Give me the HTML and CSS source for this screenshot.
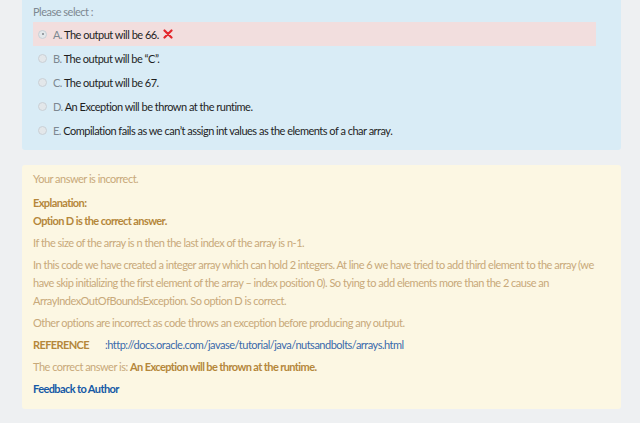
FILE: index.html
```html
<!DOCTYPE html>
<html lang="en">
<head>
  <meta charset="UTF-8">
  <title>Question review</title>
  <link rel="stylesheet" href="styles.css">
</head>
<body>

  <div class="page">
    <div class="question-box">
      <p class="prompt">Please select :</p>
      <ul class="options">
        <li class="option wrong">
          <span class="radio checked"></span>
          <span class="label"><span class="letter">A.</span> The output will be 66.</span>
          <svg class="cross" width="10" height="10" viewBox="0 0 10 10"><path d="M1.5 1.5 L8.5 8.5 M8.5 1.5 L1.5 8.5" stroke="#e3262b" stroke-width="2.2" stroke-linecap="round"/></svg>
        </li>
        <li class="option"><span class="radio"></span><span class="label"><span class="letter">B.</span> The output will be “C”.</span></li>
        <li class="option"><span class="radio"></span><span class="label"><span class="letter">C.</span> The output will be 67.</span></li>
        <li class="option"><span class="radio"></span><span class="label"><span class="letter">D.</span> An Exception will be thrown at the runtime.</span></li>
        <li class="option"><span class="radio"></span><span class="label"><span class="letter">E.</span> Compilation fails as we can’t assign int values as the elements of a char array.</span></li>
      </ul>
    </div>

    <div class="answer-box">
      <p class="first">Your answer is incorrect.</p>
      <p class="strong tight">Explanation:</p>
      <p class="strong">Option D is the correct answer.</p>
      <p>If the size of the array is n then the last index of the array is n-1.</p>
      <p>In this code we have created a integer array which can hold 2 integers. At line 6 we have tried to add third element to the array (we have skip initializing the first element of the array – index position 0). So tying to add elements more than the 2 cause an ArrayIndexOutOfBoundsException. So option D is correct.</p>
      <p>Other options are incorrect as code throws an exception before producing any output.</p>
      <p><span class="strong ref">REFERENCE</span><a href="#">:http://docs.oracle.com/javase/tutorial/java/nutsandbolts/arrays.html</a></p>
      <p>The correct answer is: <span class="strong">An Exception will be thrown at the runtime.</span></p>
      <p><a class="feedback" href="#">Feedback to Author</a></p>
    </div>
  </div>

</body>
</html>
```

FILE: styles.css
```css
body {
  margin: 0;
  background: #eef0f2;
  font-family: Lato, "Noto Sans", sans-serif;
  font-size: 11px;
  letter-spacing: -0.5px;
  color: #333;
}

.page {
  padding: 0 19px 0 22px;
}

.question-box {
  background: #d9ecf6;
  border-radius: 0 0 3px 3px;
  padding: 5px 25px 8px 11px;
}

.prompt {
  margin: 0 0 4px;
  color: #7d8891;
}

.options {
  list-style: none;
  margin: 0;
  padding: 0;
}

.option {
  display: flex;
  align-items: center;
  height: 24px;
  color: #1f1f1f;
}

.option.wrong {
  background: #f2dede;
}

.radio {
  width: 9px;
  height: 9px;
  border-radius: 50%;
  border: 1px solid #c9d0d6;
  background: #e3e7ea;
  margin: 0 6px 0 5px;
  box-sizing: border-box;
  position: relative;
}

.radio.checked::after {
  content: "";
  position: absolute;
  left: 2.5px;
  top: 2.5px;
  width: 2px;
  height: 2px;
  border-radius: 50%;
  background: #80868c;
}

.letter {
  color: #7d8891;
}

.cross {
  margin-left: 4px;
}

.answer-box {
  background: #fcf7e3;
  border-radius: 3px;
  margin-top: 15px;
  padding: 5px 25px 7px 11px;
  color: #c8a97a;
  line-height: 18px;
}

.answer-box p {
  margin: 0 0 4px;
}

.answer-box p.first {
  margin-bottom: 6px;
}

.answer-box p.tight {
  margin: 0;
}

.strong {
  color: #b5873b;
  font-weight: bold;
  letter-spacing: -0.6px;
}

.ref {
  display: inline-block;
  width: 72px;
}

.answer-box a {
  color: #3a6aab;
  text-decoration: none;
}

.answer-box a.feedback {
  color: #1559a6;
  font-weight: bold;
  letter-spacing: -0.6px;
}
```
